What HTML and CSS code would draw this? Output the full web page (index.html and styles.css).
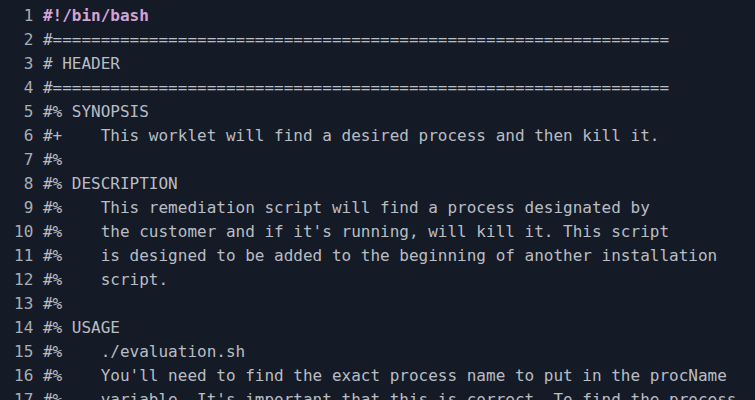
FILE: index.html
```html
<!DOCTYPE html>
<html lang="en">
<head>
<meta charset="utf-8">
<title>evaluation.sh</title>
<link rel="stylesheet" href="styles.css">
</head>
<body>
<div class="editor">
<div class="line"><span class="ln">1</span><span class="code shebang">#!/bin/bash</span></div>
<div class="line"><span class="ln">2</span><span class="code">#================================================================</span></div>
<div class="line"><span class="ln">3</span><span class="code"># HEADER</span></div>
<div class="line"><span class="ln">4</span><span class="code">#================================================================</span></div>
<div class="line"><span class="ln">5</span><span class="code">#% SYNOPSIS</span></div>
<div class="line"><span class="ln">6</span><span class="code">#+    This worklet will find a desired process and then kill it.</span></div>
<div class="line"><span class="ln">7</span><span class="code">#%</span></div>
<div class="line"><span class="ln">8</span><span class="code">#% DESCRIPTION</span></div>
<div class="line"><span class="ln">9</span><span class="code">#%    This remediation script will find a process designated by</span></div>
<div class="line"><span class="ln">10</span><span class="code">#%    the customer and if it's running, will kill it. This script</span></div>
<div class="line"><span class="ln">11</span><span class="code">#%    is designed to be added to the beginning of another installation</span></div>
<div class="line"><span class="ln">12</span><span class="code">#%    script.</span></div>
<div class="line"><span class="ln">13</span><span class="code">#%</span></div>
<div class="line"><span class="ln">14</span><span class="code">#% USAGE</span></div>
<div class="line"><span class="ln">15</span><span class="code">#%    ./evaluation.sh</span></div>
<div class="line"><span class="ln">16</span><span class="code">#%    You'll need to find the exact process name to put in the procName</span></div>
<div class="line"><span class="ln">17</span><span class="code">#%    variable. It's important that this is correct. To find the process</span></div>
</div>
</body>
</html>
```
FILE: styles.css
```css
html, body {
  margin: 0;
  padding: 0;
  background: #151b26;
  overflow: hidden;
}
.editor {
  padding: 4px 0 0 0;
  font-family: "DejaVu Sans Mono", "Liberation Mono", monospace;
  font-size: 16px;
  line-height: 24px;
  color: #b9bdc4;
}
.line {
  display: flex;
  white-space: pre;
}
.ln {
  width: 19.3px;
  padding-left: 14px;
  text-align: right;
  margin-right: 9.6px;
  color: #a9adb4;
}
.code {
  white-space: pre;
}
.shebang {
  color: #d4a3d6;
  font-weight: bold;
}
```
